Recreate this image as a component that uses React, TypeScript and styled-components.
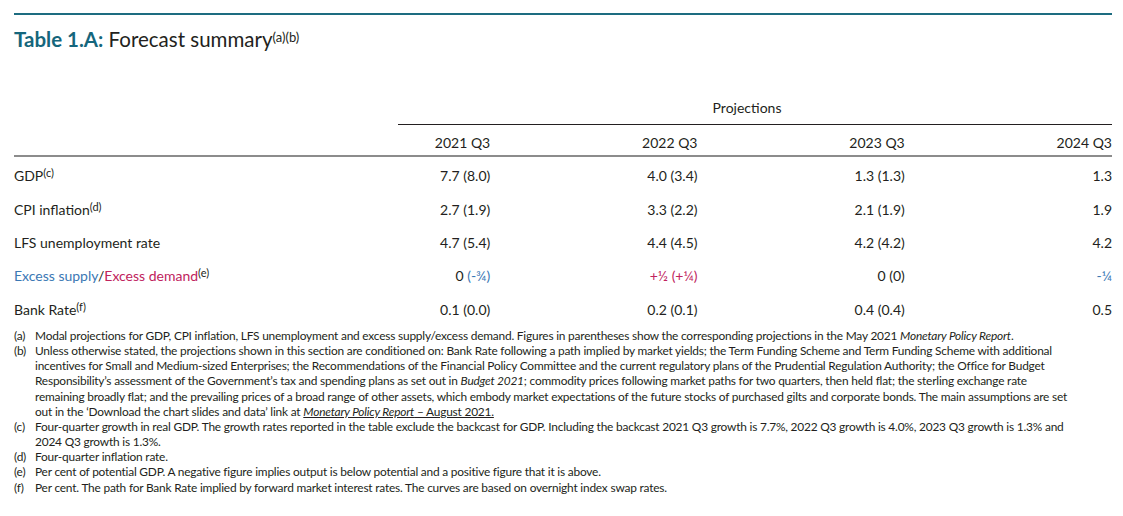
import styled, { createGlobalStyle } from "styled-components";

const GlobalStyle = createGlobalStyle`
  html, body {
    margin: 0;
    padding: 0;
    background: #ffffff;
  }
  body {
    font-family: Lato, "Noto Sans", sans-serif;
    color: #231f20;
  }
`;

type Tone = "plain" | "supply" | "demand";

const Page = styled.div`
  width: 1098px;
  margin: 13px 0 0 14px;
  border-top: 2px solid #1d6c80;
`;

const Title = styled.h1`
  margin: 12px 0 0;
  font-size: 20.5px;
  font-weight: 400;
  line-height: 24px;
  color: #231f20;

  strong {
    font-weight: 700;
    color: #15667c;
  }
`;

const TitleNote = styled.sup`
  font-size: 13px;
  vertical-align: 5px;
  line-height: 0;
`;

const Table = styled.div`
  margin-top: 47px;
  font-size: 14px;
`;

const ProjectionsRow = styled.div`
  display: flex;
  padding-left: 384px;
`;

const ProjectionsCell = styled.div`
  flex: 1;
  text-align: center;
  padding-right: 16px;
  height: 26px;
  line-height: 20px;
  border-bottom: 1px solid #231f20;
`;

const gridCols = "269px repeat(4, 1fr)";

const HeaderRow = styled.div`
  display: grid;
  grid-template-columns: ${gridCols};
  height: 32px;
  padding-top: 4px;
  box-sizing: border-box;
  align-items: center;
  border-bottom: 2px solid #8c8c8c;
`;

const BodyRow = styled.div`
  display: grid;
  grid-template-columns: ${gridCols};
  height: 33.4px;
  padding-top: 4px;
  box-sizing: border-box;
  align-items: center;
`;

const Label = styled.div`
  white-space: nowrap;
`;

const Value = styled.div`
  text-align: right;
  white-space: nowrap;
`;

const Note = styled.sup`
  font-size: 11px;
  vertical-align: 4px;
  line-height: 0;
`;

const Toned = styled.span<{ $tone: Tone }>`
  color: ${(p) =>
    p.$tone === "supply" ? "#3b78b4" : p.$tone === "demand" ? "#c0235d" : "inherit"};
`;

const Notes = styled.div`
  margin-top: 4px;
  font-size: 11.9px;
  letter-spacing: -0.2px;
  line-height: 15.15px;
`;

const NoteItem = styled.div`
  display: flex;
`;

const NoteKey = styled.span`
  flex: 0 0 21px;
`;

const NoteText = styled.span`
  flex: 1;
  white-space: nowrap;
`;

const Link = styled.span`
  text-decoration: underline;
`;

interface Cell {
  main: string;
  mainTone?: Tone;
  prev?: string;
  prevTone?: Tone;
}

interface Row {
  label: React.ReactNode;
  note: string;
  cells: Cell[];
}

const years = ["2021 Q3", "2022 Q3", "2023 Q3", "2024 Q3"];

const rows: Row[] = [
  {
    label: "GDP",
    note: "(c)",
    cells: [
      { main: "7.7", prev: "(8.0)" },
      { main: "4.0", prev: "(3.4)" },
      { main: "1.3", prev: "(1.3)" },
      { main: "1.3" },
    ],
  },
  {
    label: "CPI inflation",
    note: "(d)",
    cells: [
      { main: "2.7", prev: "(1.9)" },
      { main: "3.3", prev: "(2.2)" },
      { main: "2.1", prev: "(1.9)" },
      { main: "1.9" },
    ],
  },
  {
    label: "LFS unemployment rate",
    note: "",
    cells: [
      { main: "4.7", prev: "(5.4)" },
      { main: "4.4", prev: "(4.5)" },
      { main: "4.2", prev: "(4.2)" },
      { main: "4.2" },
    ],
  },
  {
    label: (
      <>
        <Toned $tone="supply">Excess supply</Toned>/
        <Toned $tone="demand">Excess demand</Toned>
      </>
    ),
    note: "(e)",
    cells: [
      { main: "0", prev: "(-¾)", prevTone: "supply" },
      { main: "+½", mainTone: "demand", prev: "(+¼)", prevTone: "demand" },
      { main: "0", prev: "(0)" },
      { main: "-¼", mainTone: "supply" },
    ],
  },
  {
    label: "Bank Rate",
    note: "(f)",
    cells: [
      { main: "0.1", prev: "(0.0)" },
      { main: "0.2", prev: "(0.1)" },
      { main: "0.4", prev: "(0.4)" },
      { main: "0.5" },
    ],
  },
];

export default function App() {
  return (
    <>
      <GlobalStyle />
      <Page>
        <Title>
          <strong>Table 1.A:</strong> Forecast summary<TitleNote>(a)(b)</TitleNote>
        </Title>

        <Table>
          <ProjectionsRow>
            <ProjectionsCell>Projections</ProjectionsCell>
          </ProjectionsRow>

          <HeaderRow>
            <Label />
            {years.map((y) => (
              <Value key={y}>{y}</Value>
            ))}
          </HeaderRow>

          {rows.map((row, i) => (
            <BodyRow key={i}>
              <Label>
                {row.label}
                {row.note && <Note>{row.note}</Note>}
              </Label>
              {row.cells.map((c, j) => (
                <Value key={j}>
                  <Toned $tone={c.mainTone || "plain"}>{c.main}</Toned>
                  {c.prev && (
                    <>
                      {" "}
                      <Toned $tone={c.prevTone || c.mainTone || "plain"}>{c.prev}</Toned>
                    </>
                  )}
                </Value>
              ))}
            </BodyRow>
          ))}
        </Table>

        <Notes>
          <NoteItem>
            <NoteKey>(a)</NoteKey>
            <NoteText>
              Modal projections for GDP, CPI inflation, LFS unemployment and excess supply/excess
              demand. Figures in parentheses show the corresponding projections in the May 2021{" "}
              <em>Monetary Policy Report</em>.
            </NoteText>
          </NoteItem>
          <NoteItem>
            <NoteKey>(b)</NoteKey>
            <NoteText>
              Unless otherwise stated, the projections shown in this section are conditioned on: Bank
              Rate following a path implied by market yields; the Term Funding Scheme and Term
              Funding Scheme with additional
              <br />
              incentives for Small and Medium-sized Enterprises; the Recommendations of the Financial
              Policy Committee and the current regulatory plans of the Prudential Regulation
              Authority; the Office for Budget
              <br />
              Responsibility’s assessment of the Government’s tax and spending plans as set out in{" "}
              <em>Budget 2021</em>; commodity prices following market paths for two quarters, then
              held flat; the sterling exchange rate
              <br />
              remaining broadly flat; and the prevailing prices of a broad range of other assets,
              which embody market expectations of the future stocks of purchased gilts and corporate
              bonds. The main assumptions are set
              <br />
              out in the ‘Download the chart slides and data’ link at{" "}
              <Link>
                <em>Monetary Policy Report</em> – August 2021.
              </Link>
            </NoteText>
          </NoteItem>
          <NoteItem>
            <NoteKey>(c)</NoteKey>
            <NoteText>
              Four-quarter growth in real GDP. The growth rates reported in the table exclude the
              backcast for GDP. Including the backcast 2021 Q3 growth is 7.7%, 2022 Q3 growth is
              4.0%, 2023 Q3 growth is 1.3% and
              <br />
              2024 Q3 growth is 1.3%.
            </NoteText>
          </NoteItem>
          <NoteItem>
            <NoteKey>(d)</NoteKey>
            <NoteText>Four-quarter inflation rate.</NoteText>
          </NoteItem>
          <NoteItem>
            <NoteKey>(e)</NoteKey>
            <NoteText>
              Per cent of potential GDP. A negative figure implies output is below potential and a
              positive figure that it is above.
            </NoteText>
          </NoteItem>
          <NoteItem>
            <NoteKey>(f)</NoteKey>
            <NoteText>
              Per cent. The path for Bank Rate implied by forward market interest rates. The curves
              are based on overnight index swap rates.
            </NoteText>
          </NoteItem>
        </Notes>
      </Page>
    </>
  );
}
